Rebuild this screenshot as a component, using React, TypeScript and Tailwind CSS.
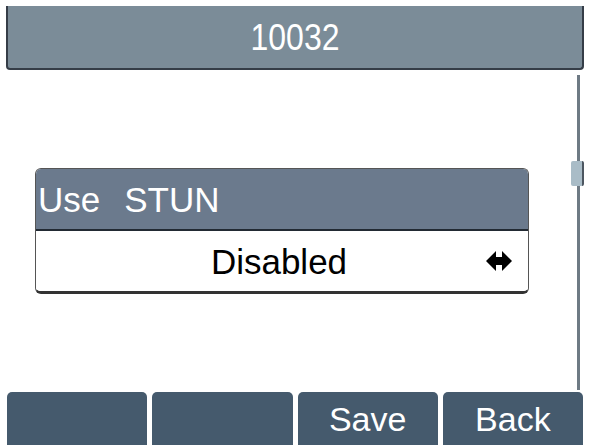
import React from "react";

function SwapArrow() {
  return (
    <svg width="26" height="20" viewBox="0 0 26 20" aria-hidden="true">
      <polygon
        points="0,10 10,0 10,6 16,6 16,0 26,10 16,20 16,14 10,14 10,20"
        fill="#000"
      />
    </svg>
  );
}

function SoftKey({ label }: { label?: string }) {
  return (
    <div className="flex-1 h-full bg-[#455a6d] rounded-t-[5px] flex items-center justify-center text-white text-[34px] leading-none">
      {label}
    </div>
  );
}

export default function App() {
  return (
    <div
      className="w-[590px] h-[445px] bg-white overflow-hidden flex flex-col"
      style={{ fontFamily: '"Liberation Sans", Arial, sans-serif' }}
    >
      {/* title bar */}
      <div className="mx-[6px] mt-[6px] h-[64px] shrink-0 bg-[#7b8c98] rounded-b-[4px] border-l-2 border-r-2 border-b-2 border-[#353d47] flex items-center justify-center text-white text-[32px] leading-none">
        <span className="scale-y-[1.15] inline-block">10032</span>
      </div>

      {/* body with scrollbar */}
      <div className="flex-1 flex">
        <div className="flex-1 pl-[35px] pt-[98px]">
          <div className="w-[494px] rounded-[6px] border border-[#555] border-b-[3px] border-b-[#333] overflow-hidden">
            <div className="h-[62px] bg-[#6b7a8d] border-b-2 border-[#222a33] flex items-center pl-[2px] text-white text-[35px] leading-none">
              <span>Use</span>
              <span className="ml-[24px]">STUN</span>
            </div>
            <div className="h-[60px] bg-white relative flex items-center justify-center text-black text-[35px] leading-none">
              <span className="-ml-[6px]">Disabled</span>
              <div className="absolute right-[16px] top-1/2 -translate-y-1/2 flex">
                <SwapArrow />
              </div>
            </div>
          </div>
        </div>
        <div className="w-[20px] relative flex justify-center pr-[4px]">
          <div className="w-[3px] h-[315px] mt-[5px] bg-[#6e7a84]" />
          <div className="absolute left-[1px] top-[91px] w-[13px] h-[25px] bg-[#a9bcc7] border-r-2 border-[#4c5660] rounded-[2px]" />
        </div>
      </div>

      {/* soft keys */}
      <div className="h-[53px] shrink-0 flex gap-[5px] px-[7px]">
        <SoftKey />
        <SoftKey />
        <SoftKey label="Save" />
        <SoftKey label="Back" />
      </div>
    </div>
  );
}
